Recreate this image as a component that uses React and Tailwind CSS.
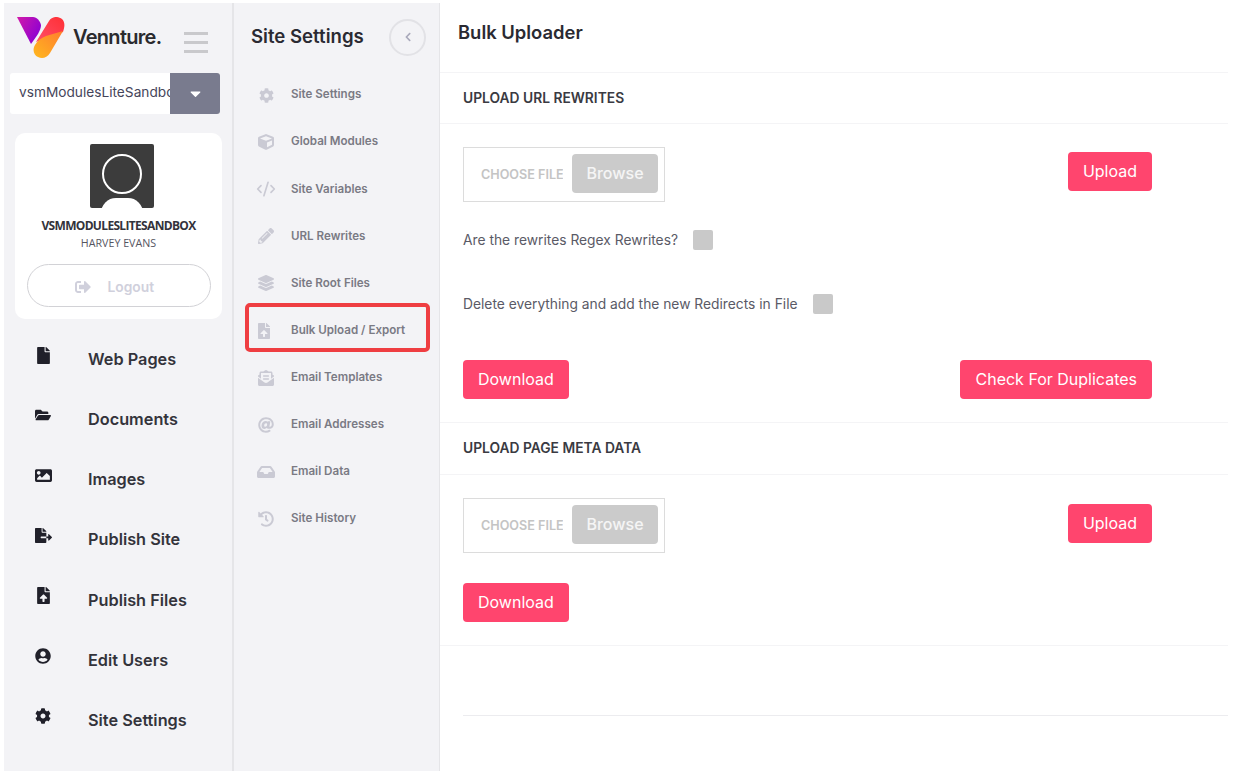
import {
  FaFile, FaFolderOpen, FaImage, FaFileExport, FaFileUpload, FaUserCircle, FaCog, FaCube,
  FaPencilAlt, FaLayerGroup, FaEnvelopeOpenText, FaAt, FaInbox, FaHistory, FaSignOutAlt, FaCaretDown, FaChevronLeft,
} from 'react-icons/fa';
import { CodeXml } from 'lucide-react';

const mainNav = [
  { label: 'Web Pages', icon: FaFile, size: 17 },
  { label: 'Documents', icon: FaFolderOpen, size: 16 },
  { label: 'Images', icon: FaImage, size: 17 },
  { label: 'Publish Site', icon: FaFileExport, size: 17 },
  { label: 'Publish Files', icon: FaFileUpload, size: 17 },
  { label: 'Edit Users', icon: FaUserCircle, size: 16 },
  { label: 'Site Settings', icon: FaCog, size: 16 },
];

const subNav = [
  { label: 'Site Settings', icon: FaCog, size: 15 },
  { label: 'Global Modules', icon: FaCube, size: 16 },
  { label: 'Site Variables', icon: CodeXml, size: 20 },
  { label: 'URL Rewrites', icon: FaPencilAlt, size: 16 },
  { label: 'Site Root Files', icon: FaLayerGroup, size: 16 },
  { label: 'Bulk Upload / Export', icon: FaFileUpload, size: 16, active: true },
  { label: 'Email Templates', icon: FaEnvelopeOpenText, size: 16 },
  { label: 'Email Addresses', icon: FaAt, size: 16 },
  { label: 'Email Data', icon: FaInbox, size: 18 },
  { label: 'Site History', icon: FaHistory, size: 16 },
];

const Logo = () => (
  <svg width="48" height="41" viewBox="0 0 48 41" className="shrink-0">
    <defs>
      <linearGradient id="lg-a" x1="0" y1="0" x2="1" y2="0.6">
        <stop offset="0" stopColor="#d21aa8" />
        <stop offset="1" stopColor="#8c00d4" />
      </linearGradient>
      <linearGradient id="lg-b" x1="0" y1="1" x2="1" y2="0">
        <stop offset="0" stopColor="#ff4f68" />
        <stop offset="1" stopColor="#ff2f35" />
      </linearGradient>
      <linearGradient id="lg-c" x1="0" y1="1" x2="1" y2="0">
        <stop offset="0" stopColor="#ffb81f" />
        <stop offset="1" stopColor="#ff7d2e" />
      </linearGradient>
    </defs>
    <path d="M0 0H16C20 0 23 4 24 8C24 13 20 19 14 27Z" fill="url(#lg-a)" />
    <path d="M19 25L32 4C35 -1 41 -1 45 2C48 5 48 9 46 15L33 20Z" fill="url(#lg-b)" />
    <path d="M18 28C20 24 24 21 29 19L46 14L33 36C30 41 25 42 21 40C17 38 15 33 18 28Z" fill="url(#lg-c)" />
  </svg>
);

const PinkButton = ({ children }) => (
  <button className="h-[39px] px-[15px] pb-[1px] rounded-[4px] bg-[#ff456e] text-white text-[16px] leading-none">
    {children}
  </button>
);

const FilePicker = () => (
  <div className="w-[202px] h-[55px] border border-[#dcdcdc] flex items-center pl-[17px] pr-[6px] justify-between">
    <span className="w-[82px] pt-[2px] overflow-hidden whitespace-nowrap text-[12.6px] font-semibold text-[#c4c4c4]">CHOOSE FILE</span>
    <span className="w-[86px] h-[39px] mb-[3px] rounded-[4px] bg-[#cbcbcb] text-white/80 text-[16px] font-medium flex items-center justify-center pb-[1px]">
      Browse
    </span>
  </div>
);

const SectionTitle = ({ children, className }) => (
  <div className={`flex items-center border-y border-[#f4f4f6] pl-[23px] text-[13.8px] font-semibold text-[#3a3a42] ${className}`}>
    {children}
  </div>
);

export default function App() {
  return (
    <div className="h-[778px] bg-white flex pl-[4px] pt-[3px] pb-[7px] overflow-hidden font-['Inter',sans-serif]">
      <aside className="w-[230px] shrink-0 bg-[#f3f3f6] border-r-2 border-[#e5e5e8] flex flex-col">
        <div className="flex items-center pl-[13px] h-[67px] pt-[2px]">
          <Logo />
          <span className="ml-[8px] pb-[1px] text-[20px] font-semibold tracking-[-0.7px] text-[#2a2a2e]">Vennture.</span>
          <div className="ml-[23px] mt-[9px] w-[24px] flex flex-col gap-[6px]">
            <span className="h-[3px] bg-[#c9c9cc]" />
            <span className="h-[3px] bg-[#c9c9cc]" />
            <span className="h-[3px] bg-[#c9c9cc]" />
          </div>
        </div>
        <div className="ml-[6px] mt-[3px] w-[210px] h-[41px] flex rounded-[3px] overflow-hidden bg-white">
          <div className="flex-1 overflow-hidden whitespace-nowrap pl-[9px] text-[13.7px] leading-[39px] text-[#45455a]">vsmModulesLiteSandbox</div>
          <div className="w-[50px] bg-[#797b8e] flex items-center justify-center">
            <FaCaretDown size={17} className="text-white" />
          </div>
        </div>
        <div className="ml-[11px] mt-[19px] w-[207px] h-[186px] bg-white rounded-[10px] flex flex-col items-center pt-[11px]">
          <div className="relative ml-[7px] w-[64px] h-[64px] bg-[#3c3c3c] rounded-[2px] overflow-hidden">
            <div className="absolute left-[12px] top-[10px] w-[40px] h-[40px] rounded-full border-2 border-white" />
            <div className="absolute left-[11px] top-[54px] w-[42px] h-[30px] rounded-full bg-white" />
          </div>
          <div className="mt-[9px] text-[12px] leading-[18px] font-bold tracking-[-0.67px] text-[#33333b] font-['Open_Sans',sans-serif]">VSMMODULESLITESANDBOX</div>
          <div className="text-[10.7px] leading-[16px] text-[#55555f] font-['Open_Sans',sans-serif]">HARVEY EVANS</div>
          <div className="mt-[13px] w-[184px] h-[43px] pt-[3px] rounded-full border border-[#d2d2d6] flex items-center pl-[47px] text-[#d0d0dc]">
            <FaSignOutAlt size={16} />
            <span className="ml-[17px] text-[13.8px] font-semibold">Logout</span>
          </div>
        </div>
        <nav className="mt-[10px] flex flex-col">
          {mainNav.map((item) => (
            <div key={item.label} className="h-[60.2px] flex items-center">
              <div className="w-[84px] pl-[29px] h-[22px] mb-[8px] flex items-center justify-start">
                <div className="w-[20px] flex justify-center">
                  <item.icon size={item.size} className="text-[#20202a]" />
                </div>
              </div>
              <span className="text-[16.3px] font-semibold text-[#33333b]">{item.label}</span>
            </div>
          ))}
        </nav>
      </aside>

      <aside className="w-[206px] shrink-0 bg-[#f3f3f6] border-r border-[#e5e5e8] flex flex-col">
        <div className="flex items-center justify-between pl-[17px] pr-[13px] h-[68.5px]">
          <span className="text-[18.6px] font-semibold text-[#2a2a32]">Site Settings</span>
          <div className="w-[37px] h-[37px] rounded-full border-2 border-[#e2e2e6] flex items-center justify-center">
            <FaChevronLeft size={10} className="text-[#a9a9bb]" />
          </div>
        </div>
        <nav className="flex flex-col">
          {subNav.map((item) => (
            <div
              key={item.label}
              className={`relative h-[47.1px] flex items-center ${item.active ? "before:content-[''] before:absolute before:left-[11px] before:top-[-4px] before:w-[185px] before:h-[49px] before:border-[4px] before:border-[#ef3e42] before:rounded-[5px]" : ''}`}
            >
              <div className="w-[57px] pl-[21px]">
                <div className={`w-[22px] flex justify-center ${item.active ? 'pr-[4px]' : ''}`}>
                  <item.icon size={item.size} className="text-[#cacad4]" />
                </div>
              </div>
              <span className="text-[11.6px] font-semibold text-[#7a7a84]">{item.label}</span>
            </div>
          ))}
        </nav>
      </aside>

      <main className="w-[788px] shrink-0 flex flex-col">
        <div className="h-[69px] pl-[18px] pb-[9px] flex items-center text-[18.4px] font-semibold text-[#2a2a32]">Bulk Uploader</div>
        <SectionTitle className="h-[52px]">UPLOAD URL REWRITES</SectionTitle>
        <div className="pl-[23px] pr-[76px] pt-[23px]">
          <div className="flex items-start justify-between">
            <FilePicker />
            <div className="mt-[5px]"><PinkButton>Upload</PinkButton></div>
          </div>
          <div className="mt-[28px] h-[20px] flex items-center text-[13.8px] text-[#5a5a66]">
            <span>Are the rewrites Regex Rewrites?</span>
            <span className="ml-[15px] w-[20px] h-[20px] rounded-[2px] bg-[#c9c9c9]" />
          </div>
          <div className="mt-[44px] h-[20px] flex items-center text-[13.8px] text-[#5a5a66]">
            <span>Delete everything and add the new Redirects in File</span>
            <span className="ml-[15px] w-[20px] h-[20px] rounded-[2px] bg-[#c9c9c9]" />
          </div>
          <div className="mt-[46px] flex justify-between">
            <PinkButton>Download</PinkButton>
            <PinkButton>Check For Duplicates</PinkButton>
          </div>
        </div>
        <SectionTitle className="h-[53px] mt-[23px]">UPLOAD PAGE META DATA</SectionTitle>
        <div className="pl-[23px] pr-[76px] pt-[23px] pb-[23px] border-b border-[#f4f4f6]">
          <div className="flex items-start justify-between">
            <FilePicker />
            <div className="mt-[6px]"><PinkButton>Upload</PinkButton></div>
          </div>
          <div className="mt-[30px]"><PinkButton>Download</PinkButton></div>
        </div>
        <div className="ml-[23px] mt-[69px] border-b border-[#ececef]" />
      </main>
    </div>
  );
}
